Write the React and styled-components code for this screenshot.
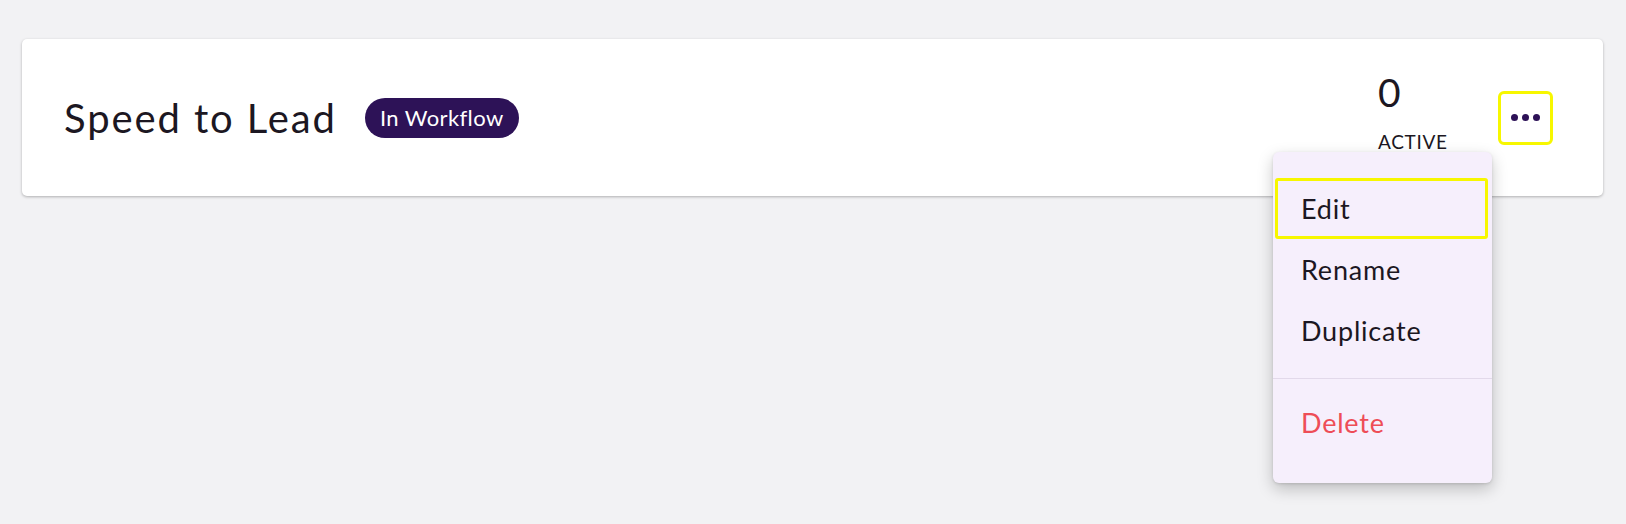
import React from "react";
import styled, { createGlobalStyle } from "styled-components";

const GlobalStyle = createGlobalStyle`
  html, body {
    margin: 0;
    padding: 0;
    background: #f2f2f4;
    font-family: "Lato", "Noto Sans", sans-serif;
    color: #1c1722;
  }
`;

const Page = styled.div`
  padding: 39px 23px 0 22px;
  height: 524px;
  box-sizing: border-box;
`;

const Card = styled.div`
  display: flex;
  align-items: center;
  height: 157px;
  box-sizing: border-box;
  padding: 0 53px 0 42px;
  background: #ffffff;
  border-radius: 5px;
  box-shadow: 0 1px 3px rgba(0, 0, 0, 0.28);
`;

const Title = styled.h2`
  margin: 0;
  font-size: 40px;
  font-weight: 400;
  letter-spacing: 1.9px;
  color: #1c1722;
`;

const Badge = styled.span`
  display: inline-flex;
  align-items: center;
  margin-left: 28px;
  height: 40px;
  padding: 0 15px;
  border-radius: 20px;
  background: #2d1257;
  color: #ffffff;
  font-size: 22px;
  letter-spacing: 0.4px;
`;

const Stats = styled.div`
  margin-left: auto;
  display: flex;
  flex-direction: column;
  width: 72px;
  padding-bottom: 14px;
`;

const Count = styled.span`
  font-size: 39px;
  line-height: 48px;
`;

const Label = styled.span`
  margin-top: 14px;
  font-size: 19px;
  line-height: 24px;
  letter-spacing: 0.7px;
`;

const MenuAnchor = styled.div`
  position: relative;
  margin-left: 51px;
`;

const DotsButton = styled.button`
  display: flex;
  align-items: center;
  justify-content: center;
  gap: 4px;
  width: 49px;
  height: 48px;
  padding: 0;
  border: none;
  border-radius: 3px;
  background: #ffffff;
  outline: 3px solid #f7f700;
  cursor: pointer;
`;

const Dot = styled.span`
  width: 7px;
  height: 7px;
  border-radius: 50%;
  background: #2d1257;
`;

const Menu = styled.ul`
  position: absolute;
  top: calc(100% + 10px);
  right: 58px;
  z-index: 10;
  width: 219px;
  margin: 0;
  padding: 26px 0 30px;
  list-style: none;
  box-sizing: border-box;
  background: #f6effc;
  border-radius: 6px;
  box-shadow: 0 6px 16px rgba(0, 0, 0, 0.22), 0 1px 3px rgba(0, 0, 0, 0.12);
`;

const Item = styled.li`
  display: flex;
  align-items: center;
  height: 61px;
  margin: 0 4px 0 2px;
  padding-left: 26px;
  font-size: 27px;
  letter-spacing: 0.8px;
  color: ${(p) => (p.danger ? "#ee4d57" : "#1c1722")};
  outline: ${(p) => (p.focused ? "3px solid #f7f700" : "none")};
  outline-offset: -3px;
  border-radius: 3px;
  cursor: pointer;
`;

const Divider = styled.li`
  height: 1px;
  margin: 17px 0 13px;
  background: #e2d9ea;
`;

export default function App() {
  return (
    <>
      <GlobalStyle />
      <Page>
        <Card>
          <Title>Speed to Lead</Title>
          <Badge>In Workflow</Badge>
          <Stats>
            <Count>0</Count>
            <Label>ACTIVE</Label>
          </Stats>
          <MenuAnchor>
            <DotsButton aria-label="More actions">
              <Dot />
              <Dot />
              <Dot />
            </DotsButton>
            <Menu>
              <Item focused>Edit</Item>
              <Item>Rename</Item>
              <Item>Duplicate</Item>
              <Divider />
              <Item danger>Delete</Item>
            </Menu>
          </MenuAnchor>
        </Card>
      </Page>
    </>
  );
}
